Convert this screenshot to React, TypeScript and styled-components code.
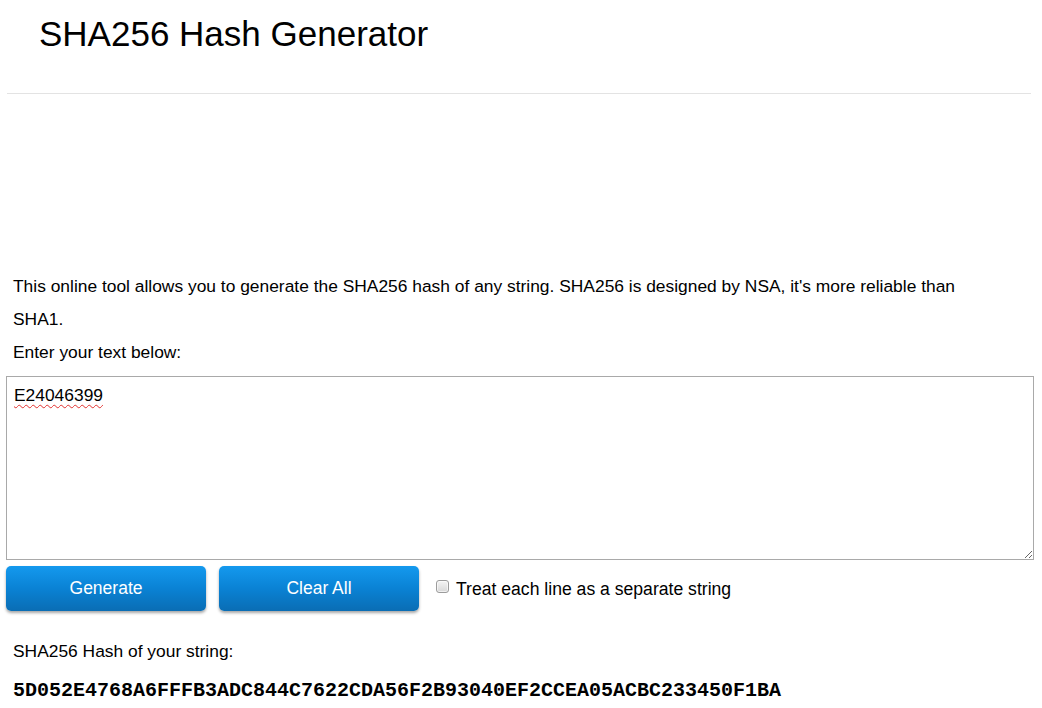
import styled, { createGlobalStyle } from 'styled-components';

const GlobalStyle = createGlobalStyle`
  html, body {
    margin: 0;
    padding: 0;
    background: #fff;
  }
  body {
    font-family: "Liberation Sans", Arial, sans-serif;
    color: #000;
  }
`;

const HASH = '5D052E4768A6FFFB3ADC844C7622CDA56F2B93040EF2CCEA05ACBC233450F1BA';

export default function App() {
  return (
    <Page>
      <GlobalStyle />
      <Header>
        <Title>SHA256 Hash Generator</Title>
      </Header>
      <Rule />
      <AdSpace />
      <Content>
        <Intro>
          This online tool allows you to generate the SHA256 hash of any string. SHA256 is designed by
          NSA, it's more reliable than SHA1.
        </Intro>
        <Line>Enter your text below:</Line>
      </Content>
      <Input defaultValue='E24046399' spellCheck={false} />
      <Actions>
        <Button>Generate</Button>
        <Button>Clear All</Button>
        <CheckLabel>
          <Check type='checkbox' />
          Treat each line as a separate string
        </CheckLabel>
      </Actions>
      <Content>
        <ResultLabel>SHA256 Hash of your string:</ResultLabel>
        <Hash>{HASH}</Hash>
      </Content>
    </Page>
  );
}

const Page = styled.div`
  width: 1028px;
  padding: 0 6px;
`;

const Header = styled.header`
  padding: 13px 0 0 33px;
  height: 79px;
  box-sizing: border-box;
`;

const Title = styled.h1`
  margin: 0;
  font-size: 35px;
  font-weight: normal;
  line-height: 42px;
`;

const Rule = styled.hr`
  margin: 14px 0 0 1px;
  width: 1024px;
  border: 0;
  border-top: 1px solid #e3e3e3;
`;

const AdSpace = styled.div`
  height: 176px;
`;

const Content = styled.div`
  padding: 0 7px;
  width: 990px;
`;

const Intro = styled.p`
  margin: 0;
  font-size: 17.4px;
  line-height: 33px;
`;

const Line = styled.div`
  font-size: 17.4px;
  line-height: 33px;
`;

const Input = styled.textarea`
  display: block;
  box-sizing: border-box;
  margin-top: 7px;
  width: 1028px;
  height: 184px;
  padding: 8px 7px;
  border: 1px solid #a9a9a9;
  font-family: "Liberation Sans", Arial, sans-serif;
  font-size: 17.4px;
  line-height: 20px;
  color: #000;
  resize: vertical;
  outline: none;
  text-decoration: underline wavy #e0302e;
  text-decoration-thickness: 1px;
  text-underline-offset: 3px;
`;

const Actions = styled.div`
  display: flex;
  align-items: center;
  gap: 13px;
  margin-top: 6px;
`;

const Button = styled.button`
  width: 200px;
  height: 45px;
  border: 0;
  border-radius: 5px;
  background: linear-gradient(to bottom, #1499ee 0%, #0a82d4 50%, #0a6db4 100%);
  box-shadow: 0 2px 3px rgba(0, 0, 0, 0.35);
  color: #fff;
  font-family: "Liberation Sans", Arial, sans-serif;
  font-size: 17.5px;
  cursor: pointer;
`;

const CheckLabel = styled.label`
  display: flex;
  align-items: center;
  gap: 7px;
  margin-left: 4px;
  margin-top: 2px;
  font-size: 17.6px;
`;

const Check = styled.input`
  appearance: none;
  margin: 0;
  width: 13px;
  height: 13px;
  box-sizing: border-box;
  border: 1px solid #9c9c9c;
  border-radius: 3px;
  background: linear-gradient(to bottom, #f4f4f4, #d8d8d8);
  box-shadow: inset 0 0 0 1px rgba(255, 255, 255, 0.6);
  position: relative;
  top: -3px;
`;

const ResultLabel = styled.div`
  margin-top: 24px;
  font-size: 17.4px;
  line-height: 33px;
`;

const Hash = styled.div`
  margin-top: 10px;
  font-family: "Liberation Mono", "Courier New", monospace;
  font-weight: bold;
  font-size: 20px;
  line-height: 26px;
`;
